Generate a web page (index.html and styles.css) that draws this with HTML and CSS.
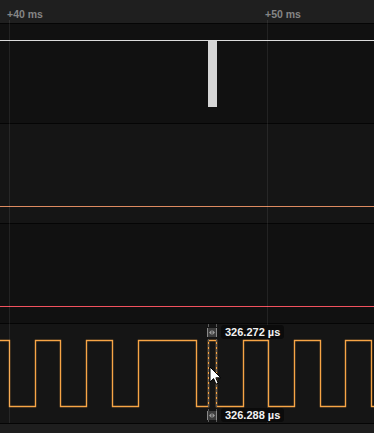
FILE: index.html
```html
<!DOCTYPE html>
<html>
<head>
<meta charset="utf-8">
<link rel="stylesheet" href="styles.css">
</head>
<body>
<div class="timeline">
  <div class="ruler">
    <span class="tick" style="left:7px">+40 ms</span>
    <span class="tick" style="left:265px">+50 ms</span>
  </div>
  <div class="tracks">
    <div class="track dark">
      <svg width="374" height="99" viewBox="0 0 374 99">
        <line x1="0" y1="16.5" x2="374" y2="16.5" stroke="#dcdcdc" stroke-width="1"/>
        <rect x="208" y="17" width="9" height="66" fill="#d6d6d6"/>
      </svg>
    </div>
    <div class="track light">
      <svg width="374" height="99" viewBox="0 0 374 99">
        <line x1="0" y1="82.5" x2="374" y2="82.5" stroke="#dc8a60" stroke-width="1"/>
      </svg>
    </div>
    <div class="track dark">
      <svg width="374" height="99" viewBox="0 0 374 99">
        <line x1="0" y1="82.5" x2="374" y2="82.5" stroke="#f2525e" stroke-width="1"/>
      </svg>
    </div>
    <div class="track light">
      <svg width="374" height="99" viewBox="0 0 374 99">
        <path d="M0 16.5 H9.5 V82.5 H35.5 V16.5 H60.5 V82.5 H86.5 V16.5 H112.5 V82.5 H138.5 V16.5 H196.5 V82.5 H208.5 V16.5 H216.5 V82.5 H243.5 V16.5 H268.5 V82.5 H294.5 V16.5 H320.5 V82.5 H345.5 V16.5 H371.5 V82.5 H374" fill="none" stroke="#f7a546" stroke-width="1.4"/>
      </svg>
    </div>
  </div>
  <div class="footer"></div>

  <div class="gridline" style="left:9px"></div>
  <div class="gridline" style="left:267px"></div>

  <div class="measure">
    <div class="mline" style="left:208px"></div>
    <div class="mline" style="left:216px"></div>
    <svg class="micon top" width="10" height="9" viewBox="0 0 10 9">
      <rect x="0" y="0" width="10" height="9" fill="#3c3c3c"/>
      <rect x="0" y="0" width="1" height="9" fill="#8a8a8a"/>
      <rect x="9" y="0" width="1" height="9" fill="#8a8a8a"/>
      <path d="M2 4.5 L4.5 2 V7 Z M8 4.5 L5.5 2 V7 Z" fill="#9a9a9a"/>
    </svg>
    <svg class="micon bottom" width="10" height="9" viewBox="0 0 10 9">
      <rect x="0" y="0" width="10" height="9" fill="#3c3c3c"/>
      <rect x="0" y="0" width="1" height="9" fill="#8a8a8a"/>
      <rect x="9" y="0" width="1" height="9" fill="#8a8a8a"/>
      <path d="M2 4.5 L4.5 2 V7 Z M8 4.5 L5.5 2 V7 Z" fill="#9a9a9a"/>
    </svg>
    <div class="mlabel top">326.272 µs</div>
    <div class="mlabel bottom">326.288 µs</div>
  </div>

  <svg class="cursor" width="14" height="20" viewBox="0 0 14 20">
    <path d="M1 1 V16 L4.6 12.6 L7 18.2 L9.2 17.2 L6.9 11.8 L11.8 11.8 Z" fill="#ffffff" stroke="#000" stroke-width="1" stroke-linejoin="round"/>
  </svg>
</div>
</body>
</html>
```
FILE: styles.css
```css
* { box-sizing: border-box; }
html, body {
  margin: 0;
  padding: 0;
  background: #1e1e1e;
}
.timeline {
  position: relative;
  width: 374px;
  height: 433px;
  overflow: hidden;
  display: flex;
  flex-direction: column;
  font-family: "Liberation Sans", Arial, sans-serif;
}
.ruler {
  position: relative;
  height: 24px;
  flex: none;
  background: #1f1f1f;
  border-bottom: 1px solid #050505;
}
.tick {
  position: absolute;
  top: 8px;
  font-size: 10.5px;
  font-weight: bold;
  color: #858585;
  line-height: 12px;
  white-space: nowrap;
}
.tracks {
  display: flex;
  flex-direction: column;
  flex: none;
}
.track {
  height: 100px;
  border-bottom: 1px solid #050505;
}
.track svg { display: block; }
.track.dark { background: #111111; }
.track.light { background: #151515; }
.footer {
  flex: 1;
  background: #1e1e1e;
}
.gridline {
  position: absolute;
  top: 20px;
  width: 1px;
  height: 403px;
  background: rgba(255,255,255,0.08);
  pointer-events: none;
}
.measure {
  position: absolute;
  left: 0;
  top: 324px;
  width: 374px;
  height: 99px;
}
.mline {
  position: absolute;
  top: 0;
  width: 1px;
  height: 99px;
  background: repeating-linear-gradient(to bottom, #5a5a5a 0 3px, transparent 3px 5px);
}
.micon {
  position: absolute;
  left: 207px;
  display: block;
}
.micon.top { top: 4px; }
.micon.bottom { top: 87px; }
.mlabel {
  position: absolute;
  left: 221px;
  height: 14px;
  padding: 0 4px;
  background: #0b0b0b;
  border-radius: 3px;
  color: #f2f2f2;
  font-size: 11px;
  font-weight: bold;
  line-height: 14px;
  white-space: nowrap;
}
.mlabel.top { top: 1px; }
.mlabel.bottom { top: 84px; }
.cursor {
  position: absolute;
  left: 209px;
  top: 366px;
  display: block;
}
```
